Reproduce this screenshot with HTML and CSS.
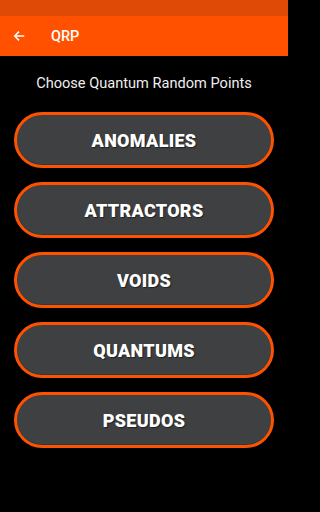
FILE: index.html
```html
<!DOCTYPE html>
<html>
<head>
<meta charset="utf-8">
<link rel="stylesheet" href="styles.css">
</head>
<body>
<div class="status"></div>
<header class="toolbar">
  <svg class="back" width="12" height="12" viewBox="0 0 16 16"><path d="M15 8H2.5M8 2.2L2.2 8 8 13.8" fill="none" stroke="#fff" stroke-width="2"/></svg>
  <span class="title">QRP</span>
</header>
<main class="content">
  <p class="subtitle">Choose Quantum Random Points</p>
  <div class="buttons">
    <button class="btn">ANOMALIES</button>
    <button class="btn">ATTRACTORS</button>
    <button class="btn">VOIDS</button>
    <button class="btn">QUANTUMS</button>
    <button class="btn">PSEUDOS</button>
  </div>
</main>
</body>
</html>
```
FILE: styles.css
```css
html, body { margin: 0; padding: 0; background: #000; }
body { width: 288px; height: 512px; overflow: hidden; font-family: Roboto, "Noto Sans", sans-serif; }
.status { height: 16px; background: #DF4A06; }
.toolbar { height: 40px; background: #FF5100; display: flex; align-items: center; padding-left: 13px; }
.back { display: block; }
.title { color: #fff; font-size: 14.5px; font-weight: 500; margin-left: 26px; }
.content { padding: 0 14px; }
.subtitle { margin: 18px 0 0; height: 18px; line-height: 18px; text-align: center; color: #eee; font-size: 14.6px; }
.buttons { display: flex; flex-direction: column; gap: 14px; margin-top: 20px; }
.btn { height: 56px; border: 3px solid #FF5100; border-radius: 28px; background: #3F4042; color: #fff; font-family: Roboto, sans-serif; font-weight: 900; font-size: 18px; letter-spacing: 0.3px; text-shadow: 1px 1px 1px rgba(0,0,0,0.5); box-shadow: inset 0 -1px 0 #1f3f44; padding: 0; }
```
